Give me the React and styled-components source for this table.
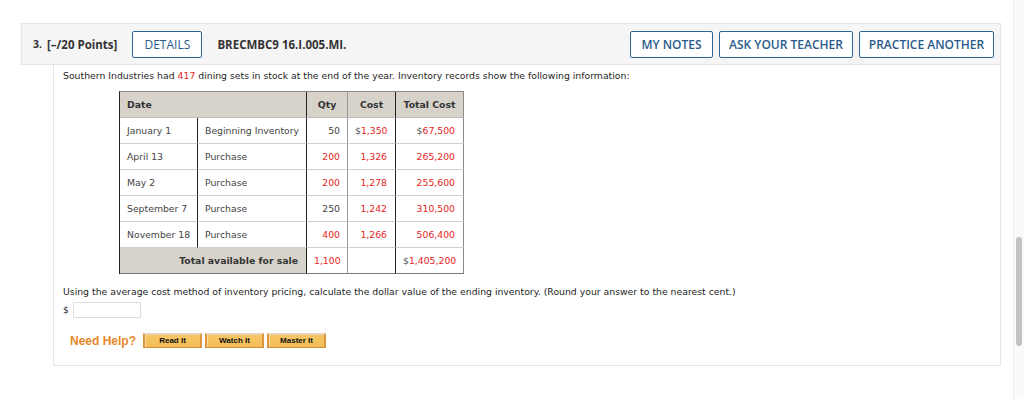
import React from "react";
import styled, { createGlobalStyle } from "styled-components";

const Global = createGlobalStyle`
  html, body { margin: 0; padding: 0; background: #fff; }
  body { font-family: "DejaVu Sans", Verdana, sans-serif; }
`;

const Screen = styled.div`
  display: flex;
  height: 399px;
  overflow: hidden;
`;

const Main = styled.div`
  flex: 1;
  padding: 23px 12px 0 21px;
  min-width: 0;
`;

const ScrollTrack = styled.div`
  width: 10px;
  border-left: 1px solid #ececec;
  background: #fafafa;
  display: flex;
  justify-content: center;
`;

const ScrollThumb = styled.div`
  margin-top: 237px;
  width: 6px;
  height: 109px;
  border-radius: 3px;
  background: #c2c2c2;
`;

const Header = styled.div`
  display: flex;
  align-items: center;
  height: 40px;
  padding: 0 6px 0 11px;
  background: #f5f5f5;
  border: 1px solid #e4e4e4;
  font-family: "Open Sans", sans-serif;
  font-size: 12px;
  color: #333;
`;

const Num = styled.span`
  font-weight: 700;
  font-size: 10.5px;
  margin-right: 5px;
`;

const Points = styled.span`
  font-weight: 700;
  font-size: 11.5px;
  margin-right: 15px;
`;

const Code = styled.span`
  font-weight: 700;
  font-size: 11.5px;
  margin-left: 15px;
  color: #333;
`;

const Spacer = styled.div`
  flex: 1;
`;

const OutlineButton = styled.button`
  height: 27px;
  width: ${(p) => p.$w}px;
  margin-left: ${(p) => p.$ml || 0}px;
  padding: 0;
  border: 1px solid #2f6496;
  border-radius: 2px;
  background: #fff;
  color: #2a5b8c;
  font-family: "Open Sans", sans-serif;
  font-size: 12px;
  font-weight: ${(p) => (p.$bold ? 600 : 400)};
  cursor: pointer;
`;

const Panel = styled.div`
  margin-left: 32px;
  height: 300px;
  border: 1px solid #e6e6e6;
  border-top: none;
  padding: 0 9px;
  font-size: 9.3px;
  color: #1e1e1e;
`;

const Para = styled.p`
  margin: 0;
  padding-top: ${(p) => p.$pt}px;
  line-height: 12px;
`;

const Red = styled.span`
  color: #e8241d;
`;

const Gray = styled.span`
  color: #555;
`;

const Table = styled.table`
  margin: 9px 0 0 56px;
  width: 344px;
  table-layout: fixed;
  border-collapse: separate;
  border-spacing: 0;
  border-top: 1px solid #8a8a8a;
  border-left: 1px solid #222;
  font-size: 9.3px;
  color: #444;
`;

const Th = styled.th`
  background: #d7d3cb;
  color: #333;
  font-weight: 700;
  text-align: ${(p) => p.$align || "center"};
  padding: 0 7px;
  height: 25px;
  line-height: 12px;
  border-bottom: 1px solid #bdbab3;
  border-right: 1px solid ${(p) => p.$rc || "#222"};
`;

const Td = styled.td`
  height: 25px;
  padding: 0 ${(p) => (p.$pr != null ? p.$pr : 7)}px 0 7px;
  line-height: 12px;
  text-align: ${(p) => p.$align || "left"};
  color: ${(p) => (p.$red ? "#e8241d" : "#444")};
  background: ${(p) => (p.$shade ? "#d7d3cb" : "#fff")};
  font-weight: ${(p) => (p.$bold ? 700 : 400)};
  border-bottom: 1px solid ${(p) => (p.$last ? "#7a7a7a" : "#cfcfcf")};
  border-right: 1px solid ${(p) => p.$rc || "#222"};
  white-space: nowrap;
  overflow: hidden;
`;

const TotalLabel = styled.span`
  color: #333;
`;

const AnswerRow = styled.div`
  display: flex;
  align-items: center;
  margin-top: 4px;
  gap: 2px;
`;

const Dollar = styled.span`
  font-size: 9px;
  color: #222;
  width: 8px;
`;

const AnswerInput = styled.input`
  width: 68px;
  height: 16px;
  box-sizing: border-box;
  border: 1px solid #dcdcdc;
  border-radius: 1px;
  padding: 0 3px;
`;

const HelpRow = styled.div`
  display: flex;
  align-items: center;
  margin: 15px 0 0 7px;
`;

const NeedHelp = styled.span`
  font-family: "Liberation Sans", Arial, sans-serif;
  font-weight: 700;
  font-size: 12px;
  color: #e8892b;
  margin-right: 7px;
`;

const HelpButton = styled.button`
  width: 59px;
  height: 15px;
  margin-right: 3px;
  padding: 0;
  box-sizing: border-box;
  background: linear-gradient(#f6c766, #f3bd57);
  border: 1px solid #d38b38;
  border-top: 2px solid #e7d4b4;
  border-left: 2px solid #de9540;
  border-right: 2px solid #de9540;
  box-shadow: inset 1px 0 0 #f9dca0;
  font-family: "Liberation Sans", Arial, sans-serif;
  font-weight: 700;
  font-size: 8px;
  line-height: 10px;
  color: #111;
  cursor: pointer;
`;

const rows = [
  { d: "January 1", t: "Beginning Inventory", q: "50", qr: false, c: [true, "1,350"], tc: [true, "67,500"] },
  { d: "April 13", t: "Purchase", q: "200", qr: true, c: [false, "1,326"], tc: [false, "265,200"] },
  { d: "May 2", t: "Purchase", q: "200", qr: true, c: [false, "1,278"], tc: [false, "255,600"] },
  { d: "September 7", t: "Purchase", q: "250", qr: false, c: [false, "1,242"], tc: [false, "310,500"] },
  { d: "November 18", t: "Purchase", q: "400", qr: true, c: [false, "1,266"], tc: [false, "506,400"] },
];

function Money({ dollar, value }) {
  return (
    <>
      {dollar ? <Gray>$</Gray> : null}
      <Red>{value}</Red>
    </>
  );
}

export default function App() {
  return (
    <>
      <Global />
      <Screen>
        <Main>
          <Header>
            <Num>3.</Num>
            <Points>[–/20 Points]</Points>
            <OutlineButton $w={70}>DETAILS</OutlineButton>
            <Code>BRECMBC9 16.I.005.MI.</Code>
            <Spacer />
            <OutlineButton $w={83} $bold>MY NOTES</OutlineButton>
            <OutlineButton $w={134} $ml={6} $bold>ASK YOUR TEACHER</OutlineButton>
            <OutlineButton $w={135} $ml={6} $bold>PRACTICE ANOTHER</OutlineButton>
          </Header>
          <Panel>
            <Para $pt={5}>
              Southern Industries had <Red>417</Red> dining sets in stock at the end of the year. Inventory records show the following information:
            </Para>
            <Table>
              <colgroup>
                <col style={{ width: 78 }} />
                <col style={{ width: 109 }} />
                <col style={{ width: 41 }} />
                <col style={{ width: 48 }} />
                <col style={{ width: 68 }} />
              </colgroup>
              <thead>
                <tr>
                  <Th colSpan={2} $align="left">Date</Th>
                  <Th $rc="#999">Qty</Th>
                  <Th>Cost</Th>
                  <Th $rc="#8a8a8a">Total Cost</Th>
                </tr>
              </thead>
              <tbody>
                {rows.map((r) => (
                  <tr key={r.d}>
                    <Td>{r.d}</Td>
                    <Td>{r.t}</Td>
                    <Td $align="right" $red={r.qr} $rc="#999">{r.q}</Td>
                    <Td $align="right" $pr={8}>
                      <Money dollar={r.c[0]} value={r.c[1]} />
                    </Td>
                    <Td $align="right" $pr={8} $rc="#8a8a8a">
                      <Money dollar={r.tc[0]} value={r.tc[1]} />
                    </Td>
                  </tr>
                ))}
                <tr>
                  <Td colSpan={2} $align="right" $shade $bold $last $pr={8}>
                    <TotalLabel>Total available for sale</TotalLabel>
                  </Td>
                  <Td $align="left" $red $last $rc="#999">1,100</Td>
                  <Td $last></Td>
                  <Td $align="right" $pr={8} $last $rc="#8a8a8a">
                    <Money dollar value="1,405,200" />
                  </Td>
                </tr>
              </tbody>
            </Table>
            <Para $pt={12}>
              Using the average cost method of inventory pricing, calculate the dollar value of the ending inventory. (Round your answer to the nearest cent.)
            </Para>
            <AnswerRow>
              <Dollar>$</Dollar>
              <AnswerInput type="text" />
            </AnswerRow>
            <HelpRow>
              <NeedHelp>Need Help?</NeedHelp>
              <HelpButton>Read It</HelpButton>
              <HelpButton>Watch It</HelpButton>
              <HelpButton>Master It</HelpButton>
            </HelpRow>
          </Panel>
        </Main>
        <ScrollTrack>
          <ScrollThumb />
        </ScrollTrack>
      </Screen>
    </>
  );
}
